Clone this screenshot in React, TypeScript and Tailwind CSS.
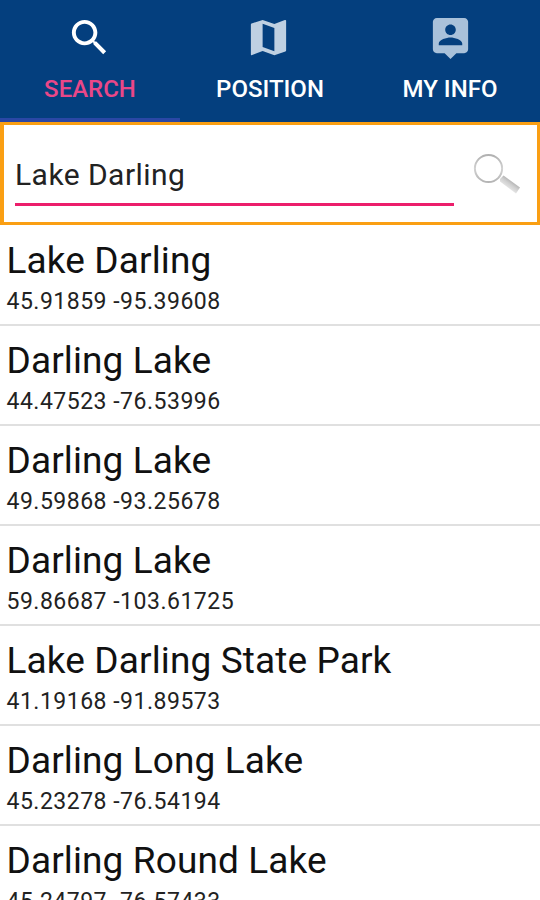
import React, { useState } from 'react';

interface Place {
  name: string;
  coords: string;
}

interface Tab {
  id: string;
  label: string;
  path: string;
}

const tabs: Tab[] = [
  {
    id: 'search',
    label: 'SEARCH',
    path: 'M15.5 14h-.79l-.28-.27C15.41 12.59 16 11.11 16 9.5 16 5.91 13.09 3 9.5 3S3 5.91 3 9.5 5.91 16 9.5 16c1.61 0 3.09-.59 4.23-1.57l.27.28v.79l5 4.99L20.49 19l-4.99-5zm-6 0C7.01 14 5 11.99 5 9.5S7.01 5 9.5 5 14 7.01 14 9.5 11.99 14 9.5 14z',
  },
  {
    id: 'position',
    label: 'POSITION',
    path: 'M20.5 3l-.16.03L15 5.1 9 3 3.36 4.9c-.21.07-.36.25-.36.48V20.5c0 .28.22.5.5.5l.16-.03L9 18.9l6 2.1 5.64-1.9c.21-.07.36-.25.36-.48V3.5c0-.28-.22-.5-.5-.5zM15 19l-6-2.11V5l6 2.11V19z',
  },
  {
    id: 'info',
    label: 'MY INFO',
    path: 'M19 2H5c-1.11 0-2 .9-2 2v14c0 1.1.89 2 2 2h4l3 3 3-3h4c1.1 0 2-.9 2-2V4c0-1.1-.9-2-2-2zm-7 3.3c1.49 0 2.7 1.21 2.7 2.7 0 1.49-1.21 2.7-2.7 2.7-1.49 0-2.7-1.21-2.7-2.7 0-1.49 1.21-2.7 2.7-2.7zM18 16H6v-.9c0-2 4-3.1 6-3.1s6 1.1 6 3.1v.9z',
  },
];

const places: Place[] = [
  { name: 'Lake Darling', coords: '45.91859 -95.39608' },
  { name: 'Darling Lake', coords: '44.47523 -76.53996' },
  { name: 'Darling Lake', coords: '49.59868 -93.25678' },
  { name: 'Darling Lake', coords: '59.86687 -103.61725' },
  { name: 'Lake Darling State Park', coords: '41.19168 -91.89573' },
  { name: 'Darling Long Lake', coords: '45.23278 -76.54194' },
  { name: 'Darling Round Lake', coords: '45.24797 -76.57433' },
];

const iconStyles: Record<string, string> = {
  search: 'fill-white mr-px',
  position: 'fill-[#bfd0e2] mr-[3px]',
  info: 'fill-[#a9c1da]',
};

const TabBar: React.FC = () => (
  <nav className="grid h-[122px] shrink-0 grid-cols-3 bg-[#043f7e]">
    {tabs.map((tab) => {
      const active = tab.id === 'search';
      return (
        <button
          key={tab.id}
          className={`flex flex-col items-center border-b-4 pt-[14px] ${
            active ? 'border-[#2a47a5] text-[#ea4788]' : 'border-[#043f7e] text-white'
          }`}
        >
          <svg viewBox="0 0 24 24" className={`h-[47px] w-[47px] ${iconStyles[tab.id]}`}>
            <path d={tab.path} />
          </svg>
          <span className="mt-[13px] text-[24px] leading-[30px] font-medium">{tab.label}</span>
        </button>
      );
    })}
  </nav>
);

const MagnifierIcon: React.FC = () => (
  <svg viewBox="0 0 50 44" className="h-[44px] w-[50px]" fill="none">
    <defs>
      <linearGradient id="rim" x1="0" y1="0" x2="0" y2="1">
        <stop offset="0" stopColor="#b0b0b0" />
        <stop offset="0.5" stopColor="#d2d2d2" />
        <stop offset="1" stopColor="#b4b4b4" />
      </linearGradient>
      <linearGradient id="handle" x1="36" y1="25" x2="31" y2="32" gradientUnits="userSpaceOnUse">
        <stop offset="0" stopColor="#adadad" />
        <stop offset="0.5" stopColor="#cfcfcf" />
        <stop offset="1" stopColor="#e4e4e4" />
      </linearGradient>
    </defs>
    <circle cx="15.5" cy="15.5" r="13.6" stroke="url(#rim)" strokeWidth="2" />
    <path d="M27 26l3.5-3.5 16.5 12-4 6-16-12z" fill="url(#handle)" />
  </svg>
);

const PlaceRow: React.FC<{ place: Place }> = ({ place }) => (
  <li className="h-[100px] shrink-0 border-b-2 border-[#e0e0e0] pt-[13px] pl-[6.5px]">
    <div className="text-[37px] leading-[44px] tracking-[0.12px] text-[#111]">{place.name}</div>
    <div className="mt-[5px] text-[23px] leading-[28px] tracking-[0.5px] text-[#222]">
      {place.coords}
    </div>
  </li>
);

const App: React.FC = () => {
  const [query, setQuery] = useState('Lake Darling');

  return (
    <div className="flex h-[900px] w-[540px] flex-col overflow-hidden bg-white font-['Roboto',sans-serif]">
      <TabBar />
      <div className="flex h-[103px] shrink-0 items-start border-y-[3px] border-r-[3px] border-l-4 border-[#fa9f13] pl-[11px]">
        <input
          value={query}
          onChange={(e) => setQuery(e.target.value)}
          className="mt-[25px] h-[56px] w-[439px] border-b-[3px] border-[#ec1e6b] pb-[5px] text-[30px] tracking-[0.45px] text-[#222] outline-none"
        />
        <button className="mt-[28px] ml-[19px]">
          <MagnifierIcon />
        </button>
      </div>
      <ul className="mt-px flex flex-col">
        {places.map((place, i) => (
          <PlaceRow key={i} place={place} />
        ))}
      </ul>
    </div>
  );
};

export default App;
